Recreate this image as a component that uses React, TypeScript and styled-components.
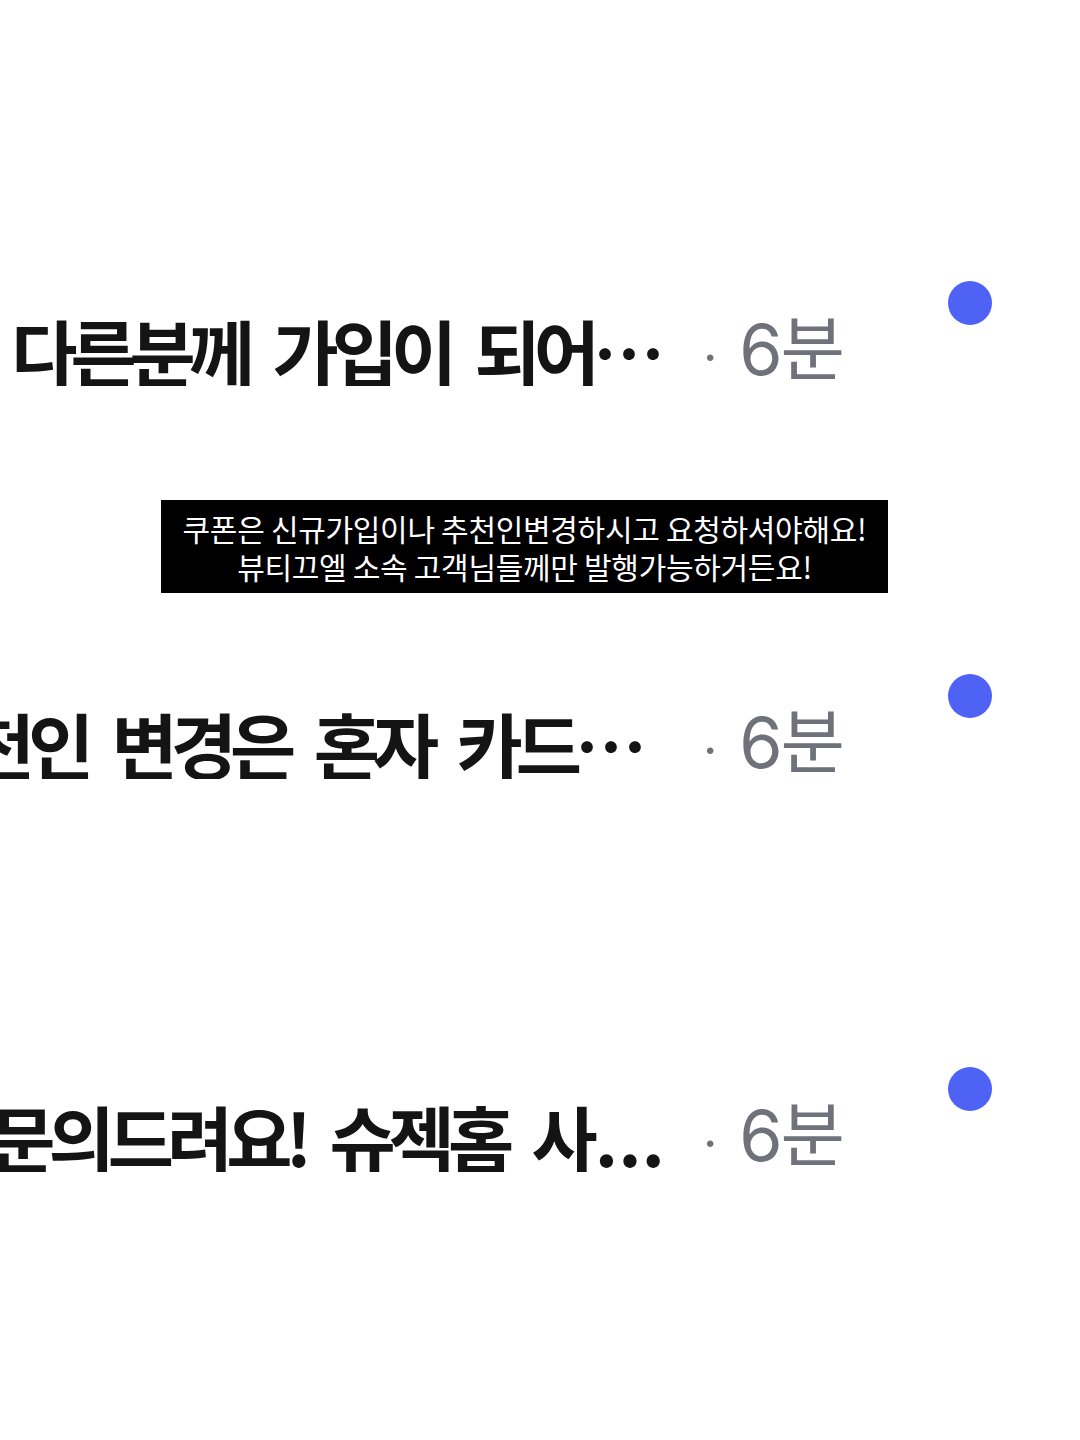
import React from 'react'
import styled, { createGlobalStyle } from 'styled-components'

const GlobalStyle = createGlobalStyle`
  html, body {
    margin: 0;
    padding: 0;
    background: #ffffff;
  }
  body {
    font-family: "Noto Sans CJK KR", "Noto Sans", sans-serif;
  }
`

const Screen = styled.div`
  position: relative;
  width: 1080px;
  height: 1440px;
  overflow: hidden;
  background: #ffffff;
`

const List = styled.div`
  display: flex;
  flex-direction: column;
  padding-top: 153px;
`

const Row = styled.div`
  display: flex;
  align-items: center;
  height: 393px;
`

// last message preview, clipped on the left when it runs long
const Preview = styled('div')<{ tail: number }>`
  display: flex;
  justify-content: flex-end;
  width: 703px;
  flex: 0 0 703px;
  overflow: hidden;
  padding-right: ${({ tail }) => tail}px;
  box-sizing: border-box;
`

const PreviewText = styled.span`
  white-space: nowrap;
  font-family: "Noto Sans CJK KR", sans-serif;
  font-weight: 600;
  font-size: 72px;
  letter-spacing: -7px;
  word-spacing: 15px;
  line-height: 1;
  color: #141414;
`

const Dots = styled.span`
  letter-spacing: 0;
  margin-left: 4px;
`

const Meta = styled.span`
  white-space: nowrap;
  font-family: "Inter", "Noto Sans CJK KR", sans-serif;
  font-weight: 400;
  font-size: 70px;
  letter-spacing: -0.03em;
  line-height: 1;
  color: #6f727a;
`

const Sep = styled.span`
  display: inline-block;
  margin-right: 24px;
  font-size: 50px;
  color: #6f727a;
`

const Spacer = styled.div`
  flex: 1;
`

const UnreadDot = styled.span`
  width: 44px;
  height: 44px;
  border-radius: 50%;
  background: #4f62f6;
  margin-right: 88px;
  margin-bottom: 94px;
`

const Caption = styled.div`
  position: absolute;
  left: 161px;
  top: 500px;
  width: 727px;
  box-sizing: border-box;
  padding: 9px 0 8px;
  background: #000000;
  color: #ffffff;
  text-align: center;
  font-family: "Noto Sans CJK KR", sans-serif;
  font-size: 30px;
  letter-spacing: -0.01em;
  line-height: 38px;
`

const chats = [
  { text: '다른분께 가입이 되어…', dots: '', tail: 45 },
  { text: '혹시 추천인 변경은 혼자 카드…', dots: '', tail: 63 },
  { text: '혹시 문의드려요! 슈젝홈 사', dots: '...', tail: 38 },
]

export default function App() {
  return (
    <Screen>
      <GlobalStyle />
      <List>
        {chats.map((chat, i) => (
          <Row key={i}>
            <Preview tail={chat.tail}>
              <PreviewText>
                {chat.text}
                {chat.dots && <Dots>{chat.dots}</Dots>}
              </PreviewText>
            </Preview>
            <Meta>
              <Sep>·</Sep>6분
            </Meta>
            <Spacer />
            <UnreadDot />
          </Row>
        ))}
      </List>
      <Caption>
        쿠폰은 신규가입이나 추천인변경하시고 요청하셔야해요!
        <br />
        뷰티끄엘 소속 고객님들께만 발행가능하거든요!
      </Caption>
    </Screen>
  )
}
